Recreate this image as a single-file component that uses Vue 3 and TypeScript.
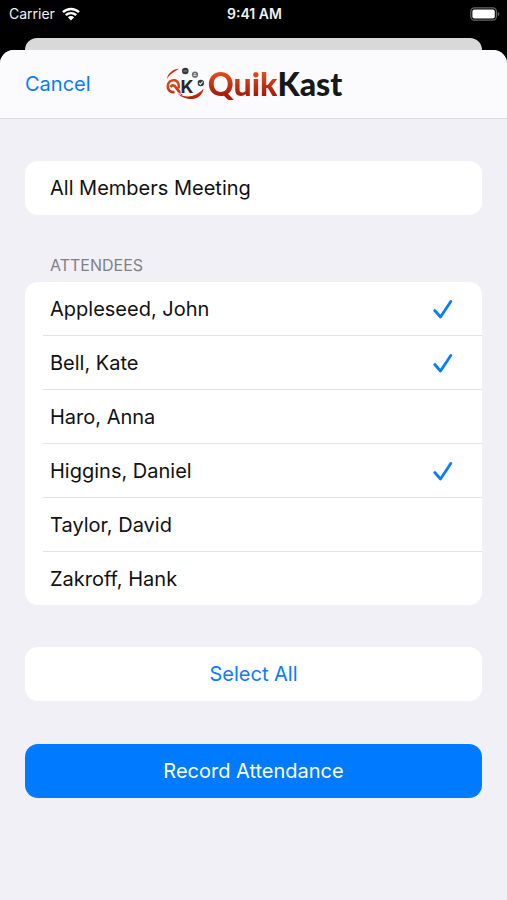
<script setup lang="ts">
import { computed, ref } from 'vue'

interface Attendee {
  id: number
  name: string
  present: boolean
}

const meeting = ref('All Members Meeting')
const attendees = ref<Attendee[]>([
  { id: 1, name: 'Appleseed, John', present: true },
  { id: 2, name: 'Bell, Kate', present: true },
  { id: 3, name: 'Haro, Anna', present: false },
  { id: 4, name: 'Higgins, Daniel', present: true },
  { id: 5, name: 'Taylor, David', present: false },
  { id: 6, name: 'Zakroff, Hank', present: false },
])

const presentCount = computed(() => attendees.value.filter((a) => a.present).length)

function selectAll(): void {
  attendees.value.forEach((a) => {
    a.present = true
  })
}
</script>

<template>
  <div class="screen">
    <div class="status">
      <div class="carrier">
        <span>Carrier</span>
        <svg class="wifi" viewBox="0 0 18 14" aria-hidden="true">
          <path d="M1 5.2a11.6 11.6 0 0 1 16 0" />
          <path d="M3.8 8.2a7.6 7.6 0 0 1 10.4 0" />
          <path class="wifi-dot" d="M9 13.4 5.9 10.2a4.4 4.4 0 0 1 6.2 0z" />
        </svg>
      </div>
      <time class="clock">9:41 AM</time>
      <svg class="battery" viewBox="0 0 30 14" aria-hidden="true">
        <rect class="battery-shell" x="0.8" y="0.8" width="25.6" height="12.4" rx="3.6" />
        <rect class="battery-level" x="2.4" y="2.4" width="22.4" height="9.2" rx="2" />
        <path class="battery-cap" d="M27.8 4.8c2 .8 2 3.6 0 4.4z" />
      </svg>
    </div>

    <div class="back-sheet"></div>

    <main class="sheet">
      <header class="bar">
        <button type="button" class="cancel">Cancel</button>
        <h1 class="brand">
          <svg class="mark" viewBox="0 0 40 34" aria-hidden="true">
            <defs>
              <linearGradient id="ember" gradientUnits="userSpaceOnUse" x1="0" y1="2" x2="0" y2="32">
                <stop offset="0" stop-color="#c8300f" />
                <stop offset="0.5" stop-color="#dc4a1a" />
                <stop offset="1" stop-color="#b3200c" />
              </linearGradient>
            </defs>
            <path fill="url(#ember)" d="M14 1.800C8 2 3 6 1.800 12 4.500 8 8.500 5 14 1.800z" />
            <path
              fill="none"
              stroke="url(#ember)"
              stroke-width="2.6"
              d="M9.500 25C5 25.800 2.500 22.500 2.800 19c.3-3.800 3.200-6 6.200-5.800 4 .3 5.600 4.300 4.400 8.300"
            />
            <path
              fill="none"
              stroke="url(#ember)"
              stroke-width="2.600"
              d="M5.500 20c1.500-2.500 4-2 5.500.5 2 3.500 3.500 5 6.500 6.500"
            />
            <path fill="url(#ember)" d="M12 26c8 5.500 19 4.500 26.500-4.500C38 27.500 33 32 26.500 32 20 32 15.500 29.500 12 26z" />
            <text class="mark-letter" x="15.500" y="26">K</text>
            <circle cx="20.300" cy="4" r="3.300" fill="#33373a" />
            <path d="M18.300 4h4" stroke="#8e9294" stroke-width="1" />
            <circle cx="30" cy="7.700" r="3.100" fill="#6a6f71" />
            <path d="M28.300 8.400h3.200M28.800 6.800h2.200" stroke="#e2e5e6" stroke-width="1" />
            <circle cx="35.800" cy="16" r="3.200" fill="#33373a" />
            <path d="m34.200 16 1.200 1.300 2.200-2.700" fill="none" stroke="#f0f1f2" stroke-width="1.200" />
          </svg>
          <span class="wordmark"><span class="quik">Quik</span>Kast</span>
        </h1>
      </header>

      <form class="form" @submit.prevent>
        <input v-model="meeting" class="card field" type="text" aria-label="Meeting name" />

        <fieldset class="group">
          <legend class="caption">ATTENDEES</legend>
          <ul class="list">
            <li v-for="a in attendees" :key="a.id" class="item">
              <label class="row" :for="`attendee-${a.id}`">
                <span>{{ a.name }}</span>
                <span class="tick">
                  <input :id="`attendee-${a.id}`" v-model="a.present" class="box" type="checkbox" />
                  <svg v-if="a.present" class="check" viewBox="0 0 20 20" aria-hidden="true">
                    <path d="M1.800 11.500 7.500 18 17.800 2.500" />
                  </svg>
                </span>
              </label>
            </li>
          </ul>
        </fieldset>

        <button type="button" class="card action" @click="selectAll">Select All</button>
        <button type="submit" class="card action primary" :disabled="presentCount === 0">
          Record Attendance
        </button>
      </form>
    </main>
  </div>
</template>

<style>
body {
  margin: 0;
  background: #000;
}
</style>

<style scoped>
.screen {
  display: flex;
  flex-direction: column;
  min-height: 100vh;
  background: #000;
  font-family: Inter, "Liberation Sans", sans-serif;
  font-size: 20px;
  line-height: 24px;
  color: #111;
}

.status {
  display: grid;
  grid-template-columns: 1fr auto 1fr;
  align-items: center;
  height: 28px;
  padding: 0 7px 0 9px;
  margin-bottom: 10px;
  color: #f2f2f2;
  font-size: 14px;
  line-height: 20px;
}

.carrier {
  display: flex;
  align-items: center;
  gap: 7px;
}

.wifi {
  width: 18px;
  height: 14px;
  fill: none;
  stroke: #fff;
  stroke-width: 2.4;
}

.wifi-dot {
  fill: #fff;
  stroke: none;
}

.clock {
  font-weight: 600;
}

.battery {
  justify-self: end;
  width: 30px;
  height: 14px;
}

.battery-shell {
  fill: none;
  stroke: #666;
  stroke-width: 1.2;
}

.battery-level {
  fill: #fff;
}

.battery-cap {
  fill: #666;
}

.back-sheet {
  height: 12px;
  margin: 0 25px;
  border-radius: 12px 12px 0 0;
  background: #d9d9da;
}

.sheet {
  flex: 1;
  border-radius: 14px 14px 0 0;
  background: #f1f0f6;
  overflow: hidden;
}

.bar {
  display: grid;
  grid-template-columns: 1fr auto 1fr;
  align-items: center;
  height: 68px;
  padding: 0 25px;
  border-bottom: 1px solid #dcdce0;
  background: #fbfbfd;
}

button,
input {
  font: inherit;
}

.cancel {
  justify-self: start;
  padding: 0;
  border: 0;
  background: none;
  color: #087cff;
}

.brand {
  display: flex;
  align-items: center;
  gap: 3px;
  margin: 0;
}

.mark {
  width: 40px;
  height: 34px;
}

.mark-letter {
  fill: #25282b;
  stroke: #fbfbfd;
  stroke-width: 2;
  paint-order: stroke;
  font-family: Inter, sans-serif;
  font-size: 18px;
  font-weight: 700;
}

.wordmark {
  font-family: Lato, Inter, sans-serif;
  font-size: 32px;
  line-height: 36px;
  font-weight: 900;
  color: #16181a;
}

.quik {
  background: linear-gradient(#e2501a 20%, #a81a0b 80%);
  background-clip: text;
  color: transparent;
}

.form {
  display: flex;
  flex-direction: column;
  padding: 42px 25px;
}

.card {
  box-sizing: border-box;
  width: 100%;
  height: 54px;
  border: 0;
  border-radius: 13px;
  background: #fff;
}

.field {
  padding: 0 25px;
  color: inherit;
}

.group {
  min-width: 0;
  margin: 0;
  padding: 0;
  border: 0;
}

.caption {
  padding: 40px 25px 7px;
  color: #808085;
  font-size: 16px;
  line-height: 20px;
}

.list {
  margin: 0 0 42px;
  padding: 0;
  border-radius: 13px;
  background: #fff;
  list-style: none;
}

.item {
  padding-left: 18px;
}

.row {
  display: flex;
  align-items: center;
  justify-content: space-between;
  height: 53px;
  padding: 0 29px 0 7px;
}

.item + .item .row {
  border-top: 1px solid #e2e2e5;
}

.tick {
  display: grid;
  width: 20px;
  height: 20px;
}

.box,
.check {
  grid-area: 1 / 1;
  width: 20px;
  height: 20px;
  margin: 0;
}

.box {
  appearance: none;
}

.check {
  fill: none;
  stroke: #087cff;
  stroke-width: 2.8;
  stroke-linecap: round;
  stroke-linejoin: round;
  pointer-events: none;
}

.action {
  color: #087cff;
}

.primary {
  margin-top: 43px;
  background: #007aff;
  color: #fff;
}
</style>
